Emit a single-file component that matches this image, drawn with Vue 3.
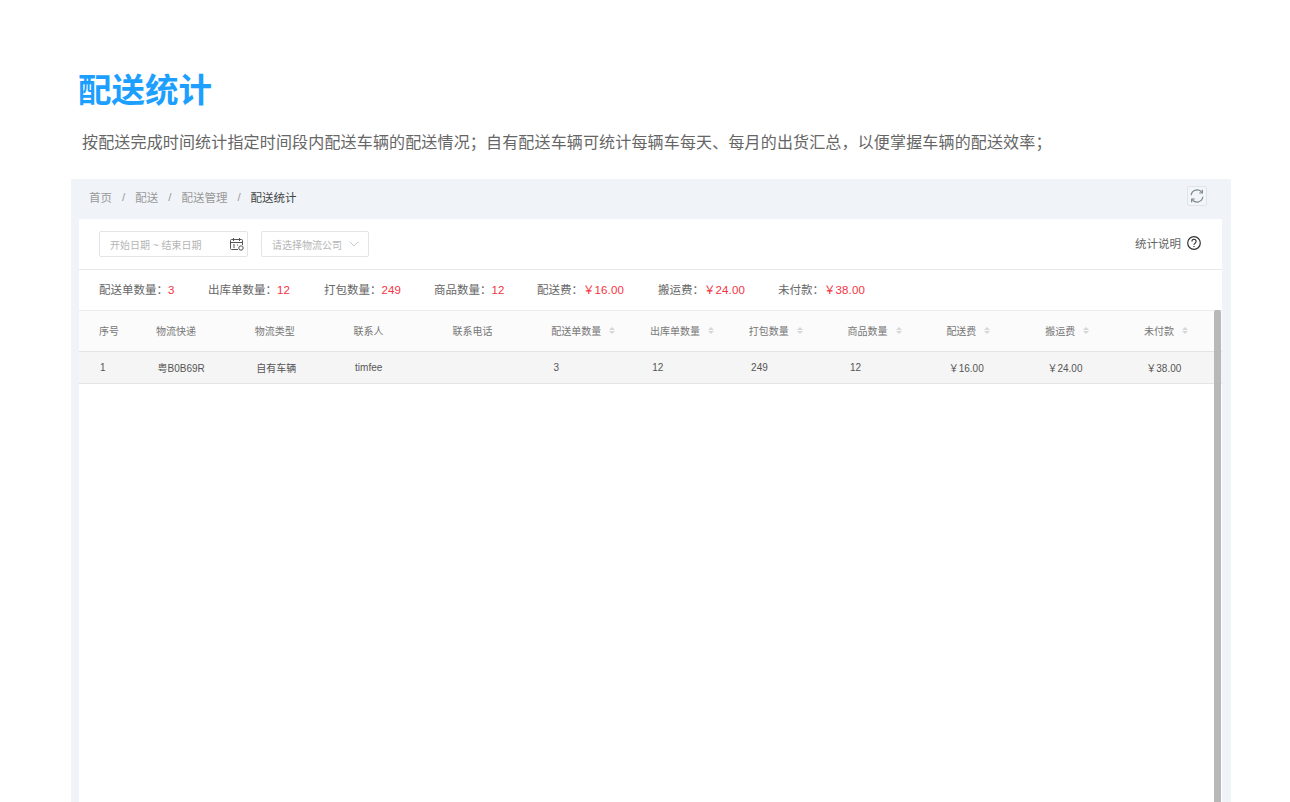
<script setup>
const crumbs = ['首页', '配送', '配送管理']
const stats = [
  { label: '配送单数量', value: '3', width: 109 },
  { label: '出库单数量', value: '12', width: 116 },
  { label: '打包数量', value: '249', width: 110 },
  { label: '商品数量', value: '12', width: 103 },
  { label: '配送费', value: '￥16.00', width: 121 },
  { label: '搬运费', value: '￥24.00', width: 120 },
  { label: '未付款', value: '￥38.00', width: 100 },
]
const cols = [
  { name: '物流快递', value: '粤B0B69R' },
  { name: '物流类型', value: '自有车辆' },
  { name: '联系人', value: 'timfee' },
  { name: '联系电话', value: '' },
  { name: '配送单数量', value: '3', sort: true },
  { name: '出库单数量', value: '12', sort: true },
  { name: '打包数量', value: '249', sort: true },
  { name: '商品数量', value: '12', sort: true },
  { name: '配送费', value: '￥16.00', sort: true },
  { name: '搬运费', value: '￥24.00', sort: true },
  { name: '未付款', value: '￥38.00', sort: true },
]
</script>

<template>
  <div class="page">
    <h1 class="title">配送统计</h1>
    <p class="desc">按配送完成时间统计指定时间段内配送车辆的配送情况；自有配送车辆可统计每辆车每天、每月的出货汇总，以便掌握车辆的配送效率；</p>
    <section class="panel">
      <div class="topbar">
        <nav class="crumbs">
          <template v-for="c in crumbs" :key="c">
            <span>{{ c }}</span><i>/</i>
          </template>
          <b>配送统计</b>
        </nav>
        <button class="refresh" aria-label="刷新">
          <svg width="16" height="16" viewBox="0 0 16 16" fill="none" stroke="#7d8a94" stroke-width="1.2">
            <path d="M2.2 7.2A5.9 5.9 0 0 1 13 4.6" />
            <path d="M13.8 8.8A5.9 5.9 0 0 1 3 11.4" />
            <path d="M13.4 1.8v3.2h-3.2" stroke-linejoin="round" />
            <path d="M2.6 14.2V11h3.2" stroke-linejoin="round" />
          </svg>
        </button>
      </div>
      <div class="card">
        <div class="toolbar">
          <div class="field date">
            <span>开始日期 ~ 结束日期</span>
            <svg width="14" height="13" viewBox="0 0 14 13" fill="none" stroke="#555" stroke-width="1">
              <path d="M8 11.5H1.5a1 1 0 0 1-1-1V2.5a1 1 0 0 1 1-1h10a1 1 0 0 1 1 1V7" />
              <path d="M.5 4.5h12M3.5 0v3M9.5 0v3M3 7h2M3 9h2M7 7h1" />
              <circle cx="11" cy="10" r="2.2" />
            </svg>
          </div>
          <div class="field select">
            <span>请选择物流公司</span>
            <svg width="10" height="6" viewBox="0 0 10 6" fill="none" stroke="#c4c8cc" stroke-width="1"><path d="M.7.7 5 5 9.3.7" /></svg>
          </div>
          <div class="help">
            <span>统计说明</span>
            <svg width="14" height="14" viewBox="0 0 14 14" fill="none" stroke="#333" stroke-width="1.2">
              <circle cx="7" cy="7" r="6.3" />
              <path d="M4.9 5.4a2.1 2.1 0 1 1 3.2 1.8c-.7.4-1.1.8-1.1 1.5" />
              <path d="M7 10v1" />
            </svg>
          </div>
        </div>
        <div class="stats">
          <div v-for="s in stats" :key="s.label" class="stat" :style="{ width: s.width + 'px' }">
            {{ s.label }}：<em>{{ s.value }}</em>
          </div>
        </div>
        <div class="tablewrap">
          <div class="grid head">
            <div class="cell first">序号</div>
            <div v-for="c in cols" :key="c.name" class="cell">
              {{ c.name }}
              <span v-if="c.sort" class="sort"><u class="up"></u><u class="down"></u></span>
            </div>
          </div>
          <div class="grid row">
            <div class="cell first">1</div>
            <div v-for="c in cols" :key="c.name" class="cell val" :class="{ num: c.sort }">{{ c.value }}</div>
          </div>
          <div class="scrollbar"></div>
        </div>
      </div>
    </section>
  </div>
</template>

<style>
html, body { margin: 0; background: #fff; overflow: hidden; }
</style>

<style scoped>
.page {
  height: 802px;
  overflow: hidden;
  box-sizing: border-box;
  padding: 68px 59px 0 71px;
  font-family: "Liberation Sans", "Noto Sans CJK SC", sans-serif;
}
.title {
  margin: 0 0 0 7px;
  font-size: 33.5px;
  line-height: 46px;
  font-weight: 600;
  color: #1c9fff;
}
.desc {
  margin: 17px 0 0 11px;
  font-size: 16px;
  line-height: 24px;
  letter-spacing: 0.16px;
  color: #666;
  white-space: nowrap;
}
.panel {
  margin-top: 24px;
  height: 640px;
  background: #f0f4f8;
  padding: 0 9px 0 8px;
}
.topbar {
  height: 40px;
  box-sizing: border-box;
  padding: 0 15px 4px 10px;
  display: flex;
  align-items: center;
  justify-content: space-between;
}
.crumbs {
  display: flex;
  align-items: center;
  font-size: 11.5px;
  color: #999;
}
.crumbs i { font-style: normal; margin: 0 10px; }
.crumbs b { font-weight: 400; color: #444; }
.refresh {
  width: 20px;
  height: 20px;
  padding: 0;
  margin-top: -2px;
  display: flex;
  align-items: center;
  justify-content: center;
  background: #f3f6f9;
  border: 1px solid #dfe4e8;
  border-radius: 2px;
}
.card { background: #fff; height: 600px; }
.toolbar {
  height: 51px;
  box-sizing: border-box;
  border-bottom: 1px solid #e8e8e8;
  display: flex;
  align-items: center;
  padding: 0 21px 0 20px;
}
.field {
  height: 26px;
  box-sizing: border-box;
  border: 1px solid #e2e4e6;
  border-radius: 2px;
  display: flex;
  align-items: center;
  justify-content: space-between;
  font-size: 10px;
  color: #b5b5b5;
}
.date { width: 149px; padding: 0 3px 0 10px; }
.select { width: 108px; margin-left: 13px; padding: 0 9px 0 10px; }
.help {
  margin-left: auto;
  padding-bottom: 2px;
  display: flex;
  align-items: center;
  gap: 6px;
  font-size: 11.5px;
  color: #666;
}
.stats {
  height: 40px;
  box-sizing: border-box;
  padding: 0 0 2px 20px;
  display: flex;
  align-items: center;
  font-size: 11.5px;
  color: #666;
  white-space: nowrap;
}
.stat em { font-style: normal; color: #f5333f; letter-spacing: 0.1px; }
.tablewrap { position: relative; height: 511px; overflow: hidden; }
.grid {
  display: grid;
  grid-template-columns: 67px repeat(11, 98.8px);
  align-items: center;
  font-size: 10px;
}
.head {
  height: 40px;
  background: #fbfbfb;
  border-top: 1px solid #ececec;
  border-bottom: 1px solid #e4e4e4;
  color: #777;
}
.row {
  height: 31px;
  background: #f5f5f5;
  border-bottom: 1px solid #e4e4e4;
  color: #555;
}
.cell {
  padding-left: 10px;
  white-space: nowrap;
  display: flex;
  align-items: center;
}
.head .cell { padding-bottom: 1px; }
.cell.first { padding-left: 20px; }
.row .cell.first { padding-left: 21px; }
.cell.val { padding-left: 11.5px; }
.cell.val.num { padding-left: 12.3px; }
.sort {
  display: inline-flex;
  flex-direction: column;
  gap: 1px;
  margin-left: 8px;
}
.sort u { display: block; width: 0; height: 0; border-left: 3px solid transparent; border-right: 3px solid transparent; }
.sort .up { border-bottom: 3px solid #d4d6d8; }
.sort .down { border-top: 3px solid #d4d6d8; }
.scrollbar {
  position: absolute;
  top: 0;
  bottom: 0;
  right: 1px;
  width: 7px;
  background: #b8b8b8;
  border-radius: 2px 2px 0 0;
}
</style>
